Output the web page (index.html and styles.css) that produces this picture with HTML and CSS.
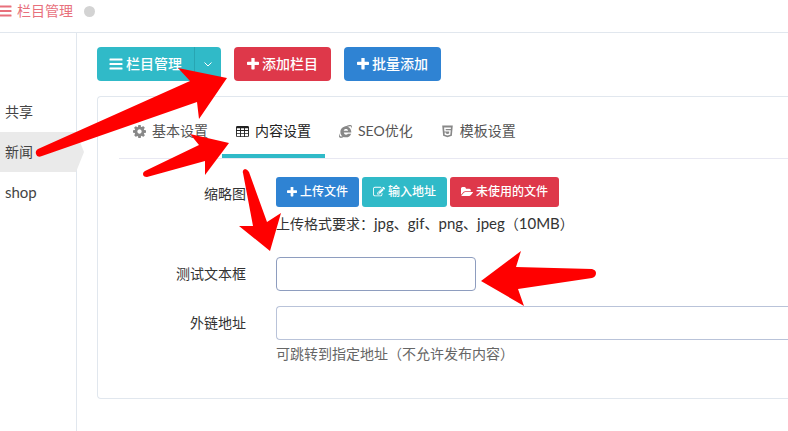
FILE: index.html
```
<!DOCTYPE html>
<html lang="zh-CN">
<head>
  <meta charset="UTF-8">
  <title>栏目管理</title>
  <link rel="stylesheet" href="styles.css">
</head>
<body>

  <!-- shared icons -->
  <svg class="sprite" width="0" height="0" aria-hidden="true">
    <symbol id="bars" viewBox="0 0 14 14"><path d="M1 1.5h12a.5.5 0 0 1 .5.5v1a.5.5 0 0 1-.5.5H1a.5.5 0 0 1-.5-.5V2a.5.5 0 0 1 .5-.5zm0 4.5h12a.5.5 0 0 1 .5.5v1a.5.5 0 0 1-.5.5H1a.5.5 0 0 1-.5-.5v-1A.5.5 0 0 1 1 6zm0 4.500h12a.5.5 0 0 1 .5.5v1a.5.5 0 0 1-.5.5H1a.5.5 0 0 1-.5-.5v-1a.5.5 0 0 1 .5-.5z"/></symbol>
    <symbol id="plus" viewBox="192 192 1408 1408"><path d="M1600 736v192q0 40-28 68t-68 28h-416v416q0 40-28 68t-68 28h-192q-40 0-68-28t-28-68v-416h-416q-40 0-68-28t-28-68v-192q0-40 28-68t68-28h416v-416q0-40 28-68t68-28h192q40 0 68 28t28 68v416h416q40 0 68 28t28 68z"/></symbol>
    <symbol id="cog" viewBox="128 128 1536 1536"><path d="M1152 896q0-106-75-181t-181-75-181 75-75 181 75 181 181 75 181-75 75-181zm512-109v222q0 12-8 23t-20 13l-185 28q-19 54-39 91 35 50 107 138 10 12 10 25t-9 23q-27 37-99 108t-94 71q-12 0-26-9l-138-108q-44 23-91 38-16 136-29 186-7 28-36 28h-222q-14 0-24.5-8.500t-11.500-21.500l-28-184q-49-16-90-37l-141 107q-10 9-25 9-14 0-25-11-126-114-165-168-7-10-7-23 0-12 8-23 15-21 51-66.500t54-70.500q-27-50-41-99l-183-27q-13-2-21-12.500t-8-23.500v-222q0-12 8-23t19-13l186-28q14-46 39-92-40-57-107-138-10-12-10-24 0-10 9-23 26-36 98.500-107.500t94.500-71.500q13 0 26 10l138 107q44-23 91-38 16-136 29-186 7-28 36-28h222q14 0 24.500 8.500t11.500 21.500l28 184q49 16 90 37l142-107q9-9 24-9 13 0 25 10 129 119 165 170 7 8 7 22 0 12-8 23-15 21-51 66.500t-54 70.500q26 50 41 98l183 28q13 2 21 12.500t8 23.500z"/></symbol>
    <symbol id="table" viewBox="0 0 14 12"><path fill-rule="evenodd" d="M1.500 0h11A1.500 1.500 0 0 1 14 1.500v9a1.500 1.500 0 0 1-1.500 1.500h-11A1.500 1.500 0 0 1 0 10.500v-9A1.500 1.500 0 0 1 1.500 0zM1 2.500v2h3.300v-2zm4.300 0v2h3.400v-2zm4.400 0v2H13v-2zM1 5.500v2h3.300v-2zm4.300 0v2h3.400v-2zm4.400 0v2H13v-2zM1 8.500V11h3.300V8.500zm4.300 0V11h3.400V8.500zm4.400 0V11H13V8.500z"/></symbol>
    <symbol id="ie" viewBox="0 0 14 14"><path fill-rule="evenodd" d="M7.400 1.500c3.500 0 5.900 2.600 5.900 6.700H5.200c.1 1.400 1 2.200 2.300 2.200 1 0 1.700-.4 2.100-1.100h3.500c-.8 2.500-2.900 4-5.700 4-3.500 0-5.900-2.400-5.900-5.800 0-3.500 2.400-6 5.900-6zM5.100 6.200h4.700c-.1-1.300-1-2-2.300-2-1.400 0-2.200.7-2.400 2z"/><path d="M1.500 7C3.100 3.800 6 1.600 9.200.5c2.400-.9 4.200-.7 4.600.5.300.8 0 2-.6 3.100.1-1.300.1-2-.4-2.500-.7-.6-2-.4-3.500.4C6.500 2.900 3.700 4.600 1.500 7zm-.2 1.500c-.7 2-.6 3.300.1 3.700.7.400 2 .1 3.400-.7l1.200 1C4.100 13.900 1.700 14.400.6 13.500c-1-1-.8-2.800.7-5z"/></symbol>
    <symbol id="html5" viewBox="0 0 12 14"><path fill-rule="evenodd" d="M.3.500h11.400l-1 11.200L6 13.300l-4.700-1.600zm2 2.300.4 4.300h5.200l-.2 2.100-1.700.5-1.700-.5-.1-1H2.800l.2 2.200 3 .9 3-.9.5-4.700H4.100L4 4.200h5.600l.1-1.400z"/></symbol>
    <symbol id="edit" viewBox="0 128 1792 1536"><path d="M888 1184l116-116-152-152-116 116v56h96v96h56zm440-720q-16-16-33 1l-350 350q-17 17-1 33t33-1l350-350q17-17 1-33zm80 594v190q0 119-84.500 203.500t-203.500 84.500h-832q-119 0-203.500-84.500t-84.500-203.500v-832q0-119 84.500-203.500t203.500-84.500h832q63 0 117 25 15 7 18 23 3 17-9 29l-49 49q-14 14-32 8-23-6-45-6h-832q-66 0-113 47t-47 113v832q0 66 47 113t113 47h832q66 0 113-47t47-113v-126q0-13 9-22l64-64q15-15 35-7t20 29zm-96-738l288 288-672 672h-288v-288zm444 132l-92 92-288-288 92-92q28-28 68-28t68 28l152 152q28 28 28 68t-28 68z"/></symbol>
    <symbol id="folder" viewBox="0 128 1880 1536"><path d="M1879 952q0 31-31 66l-336 396q-43 51-120.500 86.500t-143.500 35.500h-1088q-34 0-60.500-13t-26.500-43q0-31 31-66l336-396q43-51 120.500-86.500t143.500-35.500h1088q34 0 60.500 13t26.500 43zm-343-344v160h-832q-94 0-197 47.500t-164 119.500l-337 396-5 6q0-4-.5-12.500t-.5-12.500v-960q0-92 66-158t158-66h320q92 0 158 66t66 158v32h544q92 0 158 66t66 158z"/></symbol>
  </svg>

  <header class="topbar">
    <a class="crumb" href="#"><svg class="icon"><use href="#bars"/></svg>栏目管理</a>
    <span class="dot"></span>
  </header>

  <div class="layout">
    <nav class="sidebar">
      <a href="#">共享</a>
      <a href="#" class="active">新闻</a>
      <a href="#" class="latin">shop</a>
    </nav>

    <main class="content">
      <div class="toolbar">
        <div class="btn-group">
          <button type="button" class="btn teal"><svg class="icon"><use href="#bars"/></svg>栏目管理</button>
          <button type="button" class="btn teal toggle" aria-label="更多"><svg class="caret" viewBox="0 0 8 5"><path d="M.5.500 4 4 7.500.500"/></svg></button>
        </div>
        <button type="button" class="btn red"><svg class="icon plus"><use href="#plus"/></svg>添加栏目</button>
        <button type="button" class="btn blue"><svg class="icon plus"><use href="#plus"/></svg>批量添加</button>
      </div>

      <form class="card">
        <nav class="tabs">
          <a href="#"><svg class="icon"><use href="#cog"/></svg>基本设置</a>
          <a href="#" class="active"><svg class="icon"><use href="#table"/></svg>内容设置</a>
          <a href="#"><svg class="icon"><use href="#ie"/></svg>SEO优化</a>
          <a href="#"><svg class="icon"><use href="#html5"/></svg>模板设置</a>
        </nav>

        <div class="form-row">
          <span class="label">缩略图</span>
          <div class="field">
            <div class="uploads">
              <button type="button" class="btn small blue"><svg class="icon plus"><use href="#plus"/></svg>上传文件</button>
              <button type="button" class="btn small teal"><svg class="icon"><use href="#edit"/></svg>输入地址</button>
              <button type="button" class="btn small red"><svg class="icon"><use href="#folder"/></svg>未使用的文件</button>
            </div>
            <p class="note">上传格式要求：<span class="latin">jpg</span>、<span class="latin">gif</span>、<span class="latin">png</span>、<span class="latin">jpeg</span>（<span class="latin">10MB</span>）</p>
          </div>
        </div>

        <div class="form-row">
          <label class="label" for="test">测试文本框</label>
          <div class="field"><input id="test" class="short" type="text"></div>
        </div>

        <div class="form-row">
          <label class="label" for="link">外链地址</label>
          <div class="field">
            <input id="link" class="wide" type="text">
            <p class="help">可跳转到指定地址（不允许发布内容）</p>
          </div>
        </div>
      </form>
    </main>
  </div>

  <!-- red pointer arrows over the page -->
  <svg class="arrows" width="788" height="431" viewBox="0 0 788 431" aria-hidden="true">
    <path d="M38 149 190 81 178 68 227 78 199 119 197 102 42 156Q37 158 36 154 35 151 38 149z"/>
    <path d="M145 171 199 145 190 134 229 143 205 175 205 161 147 177Q143 177 143 174 143 172 145 171z"/>
    <path d="M243 173 253 226 239 226 270 251 281 213 267 222 249 172Q247 169 245 169 242 170 243 173z"/>
    <path d="M481 281 521 251 516 267 592 269Q596 270 596 273 596 277 592 278L518 289 524 306z"/>
  </svg>

</body>
</html>
```
FILE: styles.css
```
* {
  box-sizing: border-box;
}

body {
  margin: 0;
  min-height: 100vh;
  display: flex;
  flex-direction: column;
  font-family: Lato, "Noto Sans CJK SC", sans-serif;
  font-size: 14px;
  line-height: 20px;
  color: #333;
  background: #fff;
  overflow-x: hidden;
}

a {
  color: inherit;
  text-decoration: none;
}

p {
  margin: 0;
}

.sprite {
  position: absolute;
}

.icon {
  width: 14px;
  height: 14px;
  flex: none;
  fill: currentColor;
}

.latin {
  font-size: 15px;
}

/* header */
.topbar {
  display: flex;
  align-items: center;
  gap: 11px;
  padding: 1px 0 11px;
  border-bottom: 1px solid #e1e7ee;
}

.crumb {
  display: flex;
  align-items: center;
  gap: 5px;
  margin-left: -2px;
  color: #e8707c;
}

.dot {
  width: 11px;
  height: 11px;
  border-radius: 50%;
  background: #d3d3d3;
}

.layout {
  flex: 1;
  display: flex;
}

/* sidebar */
.sidebar {
  flex: none;
  width: 77px;
  padding-top: 59px;
  border-right: 1px solid #e1e7ee;
}

.sidebar a {
  display: block;
  padding: 10px 5px;
  color: #444;
}

.sidebar .active {
  position: relative;
  background: #eaeaea;
}

.sidebar .active::after {
  content: "";
  position: absolute;
  left: 100%;
  top: 0;
  width: 8px;
  height: 100%;
  background: #eaeaea;
  clip-path: polygon(0 0, 100% 50%, 0 100%);
}

/* buttons */
.content {
  flex: 1;
  min-width: 0;
  padding: 14px 0 31px 20px;
}

.toolbar {
  display: flex;
  gap: 13px;
}

.btn-group {
  display: flex;
}

.btn {
  display: flex;
  align-items: center;
  gap: 3px;
  height: 34px;
  padding: 0 13px;
  border: 0;
  border-radius: 4px;
  font: inherit;
  font-weight: 500;
  color: #fff;
  cursor: pointer;
}

.btn .plus {
  width: 12px;
  height: 12px;
}

.teal {
  background: #30bac8;
}

.red {
  background: #de384a;
}

.blue {
  background: #2f83d3;
}

.btn-group .btn {
  padding: 0 12px;
  border-radius: 4px 0 0 4px;
}

.btn-group .toggle {
  padding: 0 9px;
  border-left: 1px solid #28a5b2;
  border-radius: 0 4px 4px 0;
}

.caret {
  width: 8px;
  height: 5px;
  fill: none;
  stroke: #fff;
}

.small {
  height: 30px;
  padding: 0 11px;
  border-radius: 3px;
  font-size: 12px;
}

.small .icon {
  width: 12px;
  height: 12px;
}

.small .plus {
  width: 10px;
  height: 10px;
}

/* card */
.card {
  margin-top: 15px;
  padding: 14px 0 34px 21px;
  border: 1px solid #e1e7ee;
  border-right: 0;
  border-radius: 4px 0 0 4px;
}

.tabs {
  display: flex;
  margin-bottom: 18px;
  border-bottom: 1px solid #e8e8f2;
}

.tabs a {
  display: flex;
  align-items: center;
  gap: 6px;
  height: 47px;
  padding: 0 14px 3px;
  border-bottom: 4px solid transparent;
  color: #555;
}

.tabs .icon {
  width: 13px;
  height: 13px;
  color: #888;
}

.tabs .active,
.tabs .active .icon {
  color: #222;
}

.tabs .active {
  border-bottom-color: #30bac8;
}

.form-row {
  display: flex;
  gap: 30px;
  margin-bottom: 15px;
}

.form-row:last-child {
  margin-bottom: 0;
}

.label {
  flex: none;
  width: 127px;
  padding-top: 7px;
  text-align: right;
}

.field {
  flex: 1;
}

.uploads {
  display: flex;
  gap: 3px;
}

.note {
  padding: 6px 0 8px;
}

.help {
  padding-top: 4px;
  color: #666;
}

input {
  display: block;
  height: 34px;
  padding: 6px 12px;
  border: 1px solid #b9c3d9;
  border-radius: 4px;
  font: inherit;
}

.short {
  width: 200px;
  border-color: #8e9dbf;
}

.wide {
  width: 100%;
  border-right: 0;
  border-radius: 4px 0 0 4px;
}

.arrows {
  position: absolute;
  left: 0;
  top: 0;
  fill: #f00;
  pointer-events: none;
}
```
